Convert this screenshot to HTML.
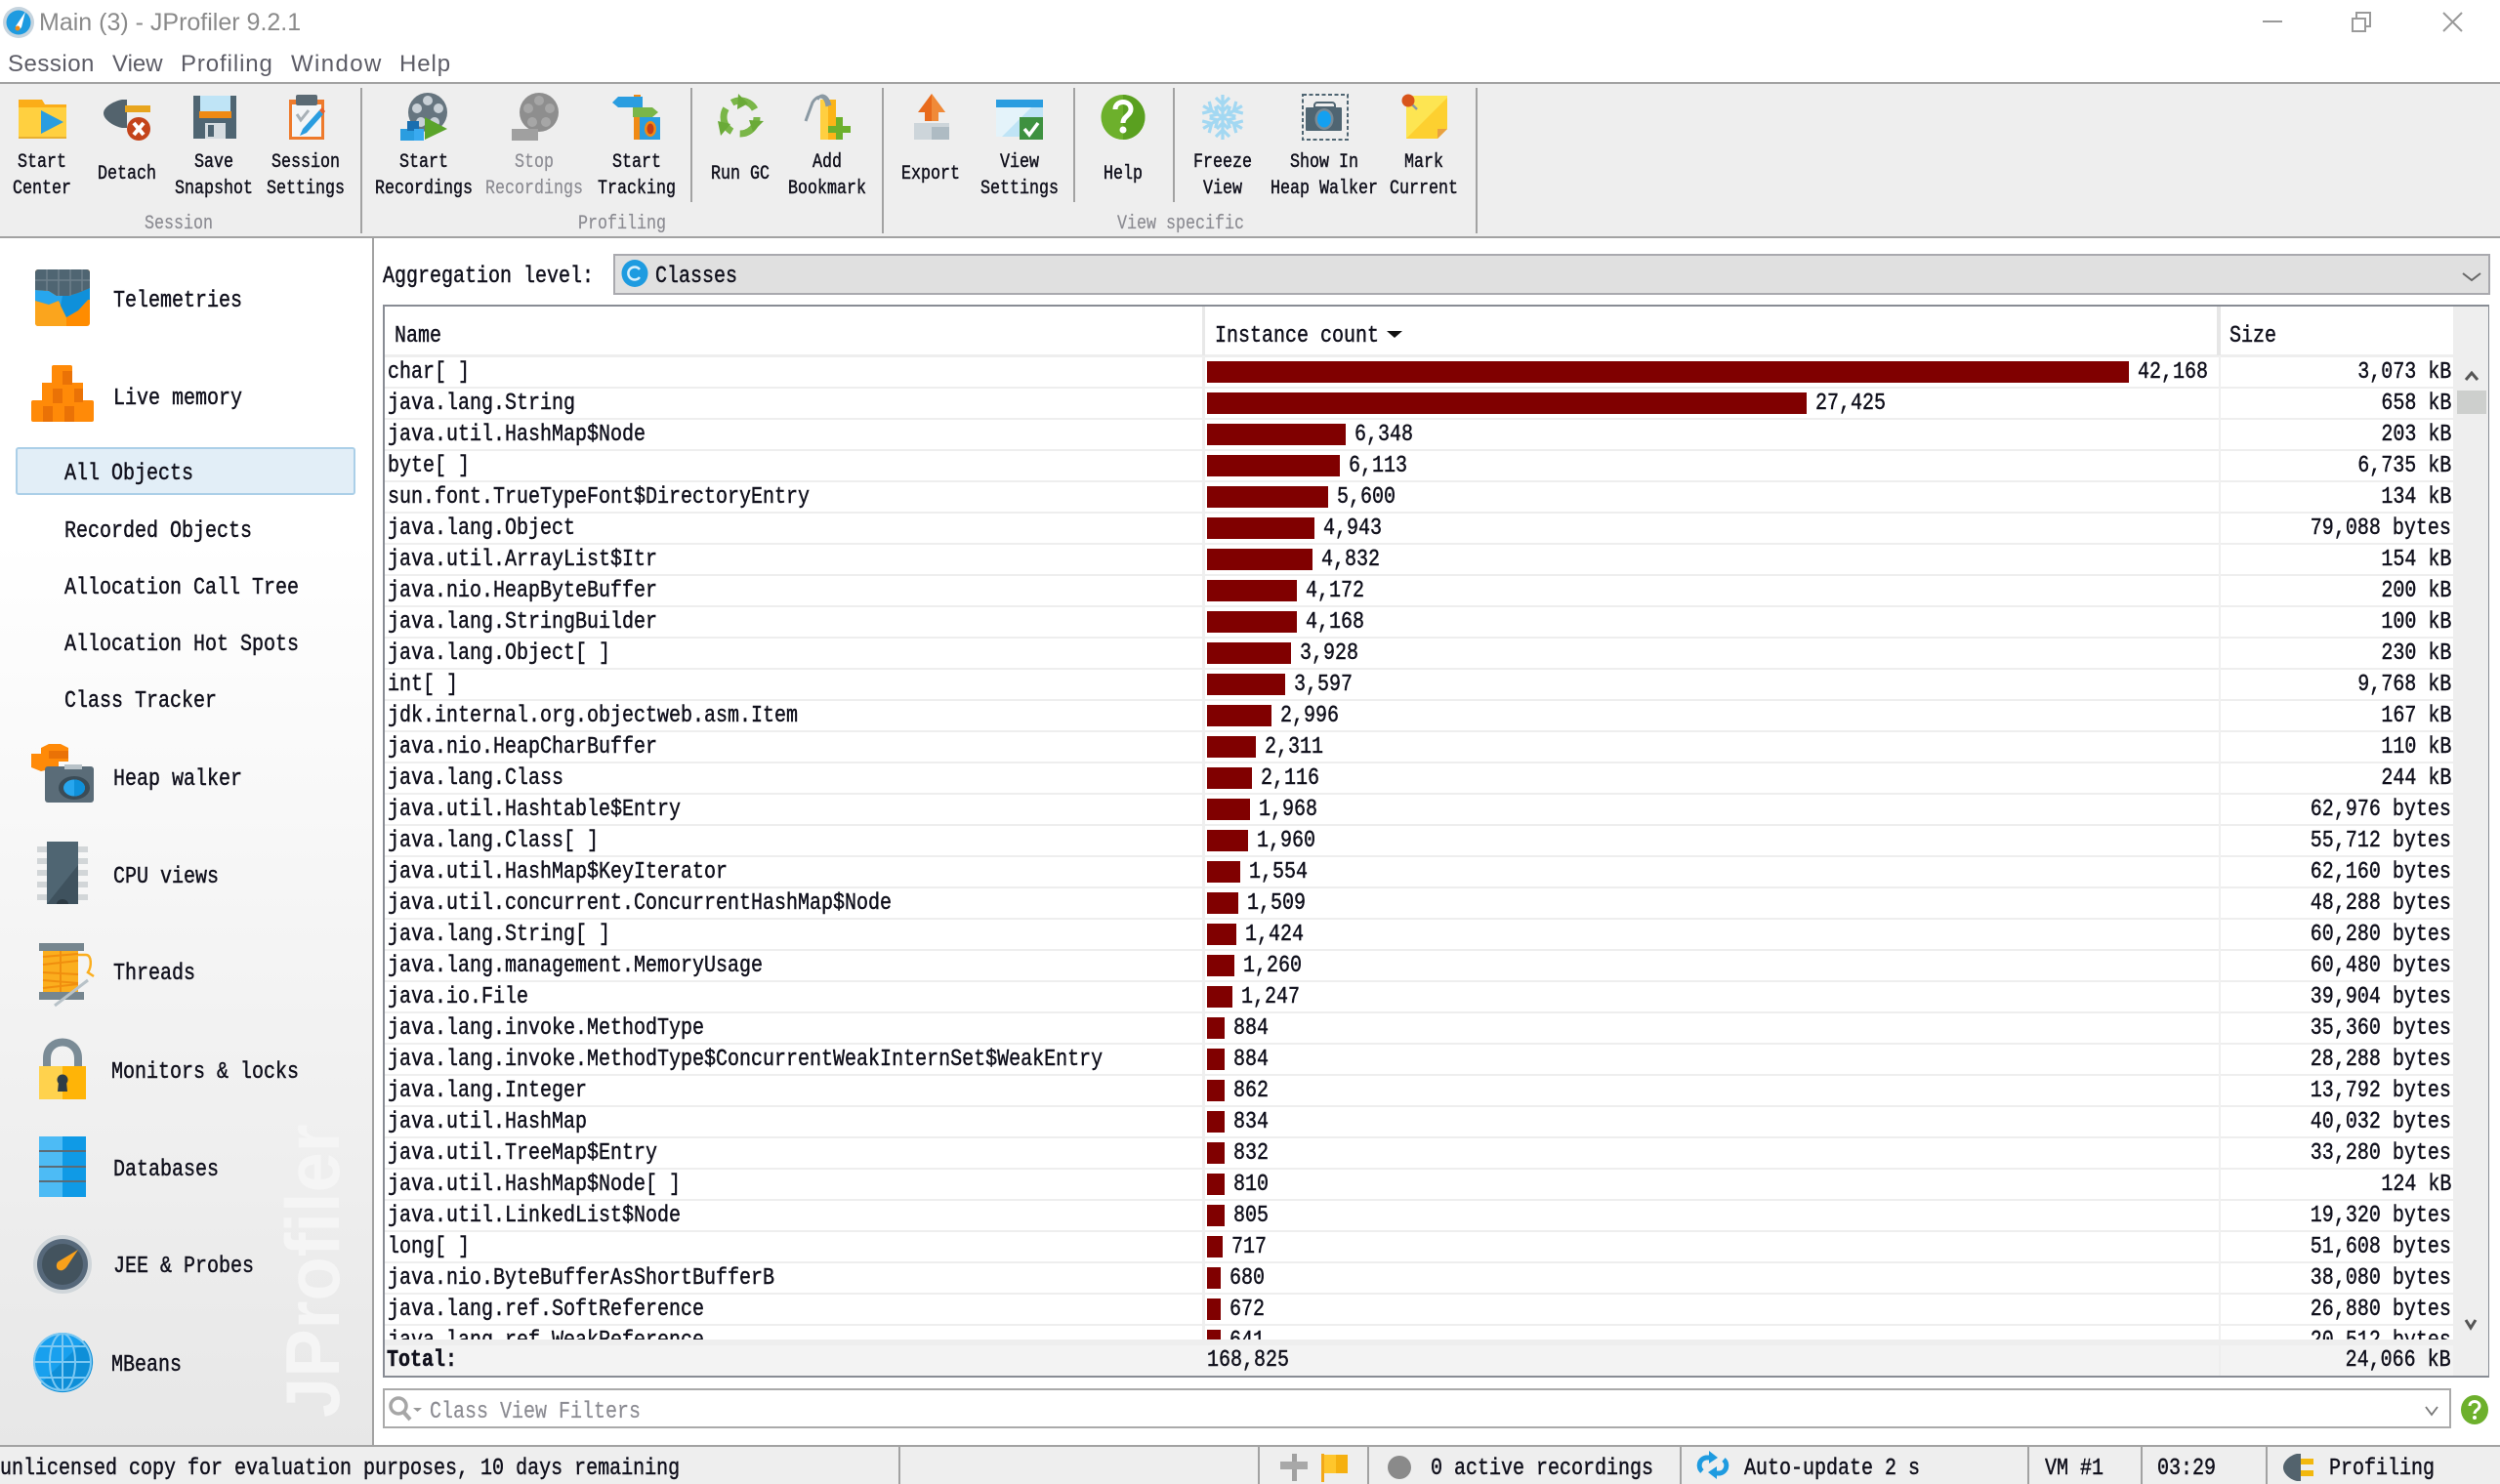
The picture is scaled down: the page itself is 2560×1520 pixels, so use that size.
<!DOCTYPE html>
<html><head><meta charset="utf-8"><title>Main (3) - JProfiler 9.2.1</title>
<style>
html,body{margin:0;padding:0;width:2560px;height:1520px;overflow:hidden;background:#fff}
div,span,i,b{position:absolute;display:block}
.t,.n,.v,.s,.m,.h{font-style:normal;font-weight:normal;font-family:"Liberation Mono",monospace;font-size:24px;line-height:28px;white-space:pre;color:#10101c;-webkit-text-stroke:.45px #10101c;transform:scaleX(.8333);transform-origin:0 50%;margin-top:2px}
.m{font-size:20px;line-height:24px;transform:scaleX(.8333) translateX(-50%);transform-origin:0 50%;width:auto}
.g{color:#8b8b92;-webkit-text-stroke:.2px #8b8b92}
.u{font-family:"Liberation Sans",sans-serif;white-space:pre}
.r{left:394px;width:2119px;height:30px;border-bottom:2px solid #eee}
.r b{left:842px;top:4px;height:22px;background:#800000}
.n{left:3px;top:0}
.v{top:0}
.s{right:3px;top:0;transform-origin:100% 50%}
.l{background:#eee}
.a{background:#a2a2a2}
</style></head><body>

<!-- title + menu -->
<span class="u" style="left:40px;top:8px;font-size:25px;line-height:30px;color:#8a8a8a">Main (3) - JProfiler 9.2.1</span>
<span class="u" style="left:8px;top:51px;font-size:24px;line-height:30px;color:#5c5c66;letter-spacing:.5px">Session</span>
<span class="u" style="left:115px;top:51px;font-size:24px;line-height:30px;color:#5c5c66">View</span>
<span class="u" style="left:185px;top:51px;font-size:24px;line-height:30px;color:#5c5c66;letter-spacing:.9px">Profiling</span>
<span class="u" style="left:298px;top:51px;font-size:24px;line-height:30px;color:#5c5c66;letter-spacing:1.4px">Window</span>
<span class="u" style="left:409px;top:51px;font-size:24px;line-height:30px;color:#5c5c66;letter-spacing:.9px">Help</span>

<!-- toolbar -->
<div class="a" style="left:0;top:84px;width:2560px;height:2px"></div>
<div class="l" style="left:0;top:86px;width:2560px;height:156px"></div>
<div class="a" style="left:0;top:242px;width:2560px;height:2px"></div>
<div class="a" style="left:369px;top:90px;width:2px;height:149px"></div>
<div class="a" style="left:707px;top:90px;width:2px;height:117px"></div>
<div class="a" style="left:903px;top:90px;width:2px;height:149px"></div>
<div class="a" style="left:1099px;top:90px;width:2px;height:117px"></div>
<div class="a" style="left:1201px;top:90px;width:2px;height:117px"></div>
<div class="a" style="left:1511px;top:90px;width:2px;height:149px"></div>

<span class="m" style="left:43px;top:153px">Start</span><span class="m" style="left:43px;top:180px">Center</span>
<span class="m" style="left:130px;top:165px">Detach</span>
<span class="m" style="left:219px;top:153px">Save</span><span class="m" style="left:219px;top:180px">Snapshot</span>
<span class="m" style="left:313px;top:153px">Session</span><span class="m" style="left:313px;top:180px">Settings</span>
<span class="m" style="left:434px;top:153px">Start</span><span class="m" style="left:434px;top:180px">Recordings</span>
<span class="m g" style="left:547px;top:153px">Stop</span><span class="m g" style="left:547px;top:180px">Recordings</span>
<span class="m" style="left:652px;top:153px">Start</span><span class="m" style="left:652px;top:180px">Tracking</span>
<span class="m" style="left:758px;top:165px">Run GC</span>
<span class="m" style="left:847px;top:153px">Add</span><span class="m" style="left:847px;top:180px">Bookmark</span>
<span class="m" style="left:953px;top:165px">Export</span>
<span class="m" style="left:1044px;top:153px">View</span><span class="m" style="left:1044px;top:180px">Settings</span>
<span class="m" style="left:1150px;top:165px">Help</span>
<span class="m" style="left:1252px;top:153px">Freeze</span><span class="m" style="left:1252px;top:180px">View</span>
<span class="m" style="left:1356px;top:153px">Show In</span><span class="m" style="left:1356px;top:180px">Heap Walker</span>
<span class="m" style="left:1458px;top:153px">Mark</span><span class="m" style="left:1458px;top:180px">Current</span>
<span class="m g" style="left:183px;top:216px">Session</span>
<span class="m g" style="left:637px;top:216px">Profiling</span>
<span class="m g" style="left:1209px;top:216px">View specific</span>

<!-- sidebar -->
<div style="left:0;top:244px;width:381px;height:1236px;background:linear-gradient(#fff 25%,#e7e7e7 100%)"></div>
<div class="a" style="left:381px;top:244px;width:2px;height:1236px"></div>
<span style="left:281px;top:1452px;font:bold 78px/78px 'Liberation Sans',sans-serif;color:#f5f5f5;white-space:pre;transform:rotate(-90deg) scaleX(.95);transform-origin:0 0">JProfiler</span>
<div style="left:16px;top:458px;width:344px;height:45px;background:#e2eef7;border:2px solid #abcfe8;border-radius:3px"></div>
<span class="t" style="left:116px;top:293px">Telemetries</span>
<span class="t" style="left:116px;top:393px">Live memory</span>
<span class="t" style="left:66px;top:470px">All Objects</span>
<span class="t" style="left:66px;top:529px">Recorded Objects</span>
<span class="t" style="left:66px;top:587px">Allocation Call Tree</span>
<span class="t" style="left:66px;top:645px">Allocation Hot Spots</span>
<span class="t" style="left:66px;top:703px">Class Tracker</span>
<span class="t" style="left:116px;top:783px">Heap walker</span>
<span class="t" style="left:116px;top:883px">CPU views</span>
<span class="t" style="left:116px;top:982px">Threads</span>
<span class="t" style="left:114px;top:1083px">Monitors &amp; locks</span>
<span class="t" style="left:116px;top:1183px">Databases</span>
<span class="t" style="left:116px;top:1282px">JEE &amp; Probes</span>
<span class="t" style="left:114px;top:1383px">MBeans</span>

<!-- aggregation -->
<span class="t" style="left:392px;top:268px">Aggregation level:</span>
<div style="left:628px;top:260px;width:1918px;height:38px;background:#e0e0e0;border:2px solid #a9a9ae"></div>
<span class="t" style="left:671px;top:268px">Classes</span>

<!-- table -->
<div style="left:392px;top:312px;width:2153px;height:1095px;border:2px solid #888c94;background:#fff"></div>
<div class="l" style="left:2512px;top:314px;width:36px;height:1095px"></div>
<div style="left:394px;top:363px;width:2118px;height:3px;background:#eee"></div>
<span class="h" style="left:404px;top:329px">Name</span>
<span class="h" style="left:1244px;top:329px">Instance count</span>
<span class="h" style="left:2283px;top:329px">Size</span>
<div style="left:1231px;top:314px;width:3px;height:50px;background:#e8e8e8"></div>
<div style="left:2270px;top:314px;width:4px;height:50px;background:#e6e6e6"></div>

<div style="left:0;top:0;width:2513px;height:1372px;overflow:hidden">
<div class="r" style="top:366px"><i class="n">char[ ]</i><b style="width:944px"></b><i class="v" style="left:1795px">42,168</i><i class="s">3,073 kB</i></div>
<div class="r" style="top:398px"><i class="n">java.lang.String</i><b style="width:614px"></b><i class="v" style="left:1465px">27,425</i><i class="s">658 kB</i></div>
<div class="r" style="top:430px"><i class="n">java.util.HashMap$Node</i><b style="width:142px"></b><i class="v" style="left:993px">6,348</i><i class="s">203 kB</i></div>
<div class="r" style="top:462px"><i class="n">byte[ ]</i><b style="width:136px"></b><i class="v" style="left:987px">6,113</i><i class="s">6,735 kB</i></div>
<div class="r" style="top:494px"><i class="n">sun.font.TrueTypeFont$DirectoryEntry</i><b style="width:124px"></b><i class="v" style="left:975px">5,600</i><i class="s">134 kB</i></div>
<div class="r" style="top:526px"><i class="n">java.lang.Object</i><b style="width:110px"></b><i class="v" style="left:961px">4,943</i><i class="s">79,088 bytes</i></div>
<div class="r" style="top:558px"><i class="n">java.util.ArrayList$Itr</i><b style="width:108px"></b><i class="v" style="left:959px">4,832</i><i class="s">154 kB</i></div>
<div class="r" style="top:590px"><i class="n">java.nio.HeapByteBuffer</i><b style="width:92px"></b><i class="v" style="left:943px">4,172</i><i class="s">200 kB</i></div>
<div class="r" style="top:622px"><i class="n">java.lang.StringBuilder</i><b style="width:92px"></b><i class="v" style="left:943px">4,168</i><i class="s">100 kB</i></div>
<div class="r" style="top:654px"><i class="n">java.lang.Object[ ]</i><b style="width:86px"></b><i class="v" style="left:937px">3,928</i><i class="s">230 kB</i></div>
<div class="r" style="top:686px"><i class="n">int[ ]</i><b style="width:80px"></b><i class="v" style="left:931px">3,597</i><i class="s">9,768 kB</i></div>
<div class="r" style="top:718px"><i class="n">jdk.internal.org.objectweb.asm.Item</i><b style="width:66px"></b><i class="v" style="left:917px">2,996</i><i class="s">167 kB</i></div>
<div class="r" style="top:750px"><i class="n">java.nio.HeapCharBuffer</i><b style="width:50px"></b><i class="v" style="left:901px">2,311</i><i class="s">110 kB</i></div>
<div class="r" style="top:782px"><i class="n">java.lang.Class</i><b style="width:46px"></b><i class="v" style="left:897px">2,116</i><i class="s">244 kB</i></div>
<div class="r" style="top:814px"><i class="n">java.util.Hashtable$Entry</i><b style="width:44px"></b><i class="v" style="left:895px">1,968</i><i class="s">62,976 bytes</i></div>
<div class="r" style="top:846px"><i class="n">java.lang.Class[ ]</i><b style="width:42px"></b><i class="v" style="left:893px">1,960</i><i class="s">55,712 bytes</i></div>
<div class="r" style="top:878px"><i class="n">java.util.HashMap$KeyIterator</i><b style="width:34px"></b><i class="v" style="left:885px">1,554</i><i class="s">62,160 bytes</i></div>
<div class="r" style="top:910px"><i class="n">java.util.concurrent.ConcurrentHashMap$Node</i><b style="width:32px"></b><i class="v" style="left:883px">1,509</i><i class="s">48,288 bytes</i></div>
<div class="r" style="top:942px"><i class="n">java.lang.String[ ]</i><b style="width:30px"></b><i class="v" style="left:881px">1,424</i><i class="s">60,280 bytes</i></div>
<div class="r" style="top:974px"><i class="n">java.lang.management.MemoryUsage</i><b style="width:28px"></b><i class="v" style="left:879px">1,260</i><i class="s">60,480 bytes</i></div>
<div class="r" style="top:1006px"><i class="n">java.io.File</i><b style="width:26px"></b><i class="v" style="left:877px">1,247</i><i class="s">39,904 bytes</i></div>
<div class="r" style="top:1038px"><i class="n">java.lang.invoke.MethodType</i><b style="width:18px"></b><i class="v" style="left:869px">884</i><i class="s">35,360 bytes</i></div>
<div class="r" style="top:1070px"><i class="n">java.lang.invoke.MethodType$ConcurrentWeakInternSet$WeakEntry</i><b style="width:18px"></b><i class="v" style="left:869px">884</i><i class="s">28,288 bytes</i></div>
<div class="r" style="top:1102px"><i class="n">java.lang.Integer</i><b style="width:18px"></b><i class="v" style="left:869px">862</i><i class="s">13,792 bytes</i></div>
<div class="r" style="top:1134px"><i class="n">java.util.HashMap</i><b style="width:18px"></b><i class="v" style="left:869px">834</i><i class="s">40,032 bytes</i></div>
<div class="r" style="top:1166px"><i class="n">java.util.TreeMap$Entry</i><b style="width:18px"></b><i class="v" style="left:869px">832</i><i class="s">33,280 bytes</i></div>
<div class="r" style="top:1198px"><i class="n">java.util.HashMap$Node[ ]</i><b style="width:18px"></b><i class="v" style="left:869px">810</i><i class="s">124 kB</i></div>
<div class="r" style="top:1230px"><i class="n">java.util.LinkedList$Node</i><b style="width:18px"></b><i class="v" style="left:869px">805</i><i class="s">19,320 bytes</i></div>
<div class="r" style="top:1262px"><i class="n">long[ ]</i><b style="width:16px"></b><i class="v" style="left:867px">717</i><i class="s">51,608 bytes</i></div>
<div class="r" style="top:1294px"><i class="n">java.nio.ByteBufferAsShortBufferB</i><b style="width:14px"></b><i class="v" style="left:865px">680</i><i class="s">38,080 bytes</i></div>
<div class="r" style="top:1326px"><i class="n">java.lang.ref.SoftReference</i><b style="width:14px"></b><i class="v" style="left:865px">672</i><i class="s">26,880 bytes</i></div>
<div class="r" style="top:1358px"><i class="n">java.lang.ref.WeakReference</i><b style="width:14px"></b><i class="v" style="left:865px">641</i><i class="s">20,512 bytes</i></div>
<div style="left:1231px;top:364px;width:3px;height:1010px;background:#efefef"></div>
<div style="left:2272px;top:364px;width:2px;height:1010px;background:#f0f0f0"></div>
</div>
<div class="l" style="left:394px;top:1372px;width:2120px;height:6px"></div>
<div style="left:394px;top:1378px;width:2118px;height:31px;background:#f3f3f3"></div>
<div style="left:2272px;top:1378px;width:2px;height:31px;background:#eee"></div>
<span class="t" style="left:396px;top:1378px;font-weight:bold;-webkit-text-stroke:.5px #10101c">Total:</span>
<span class="t" style="left:1236px;top:1378px">168,825</span>
<span class="t" style="right:50px;top:1378px;transform-origin:100% 50%">24,066 kB</span>
<div style="left:2516px;top:400px;width:30px;height:24px;background:#cdcfcd"></div>

<!-- filter -->
<div style="left:392px;top:1422px;width:2114px;height:37px;background:#fff;border:2px solid #aaa"></div>
<span class="t g" style="left:440px;top:1431px">Class View Filters</span>

<!-- status bar -->
<div class="l" style="left:0;top:1482px;width:2560px;height:38px"></div>
<div class="a" style="left:0;top:1480px;width:2560px;height:2px"></div>
<div class="a" style="left:920px;top:1482px;width:2px;height:38px"></div>
<div class="a" style="left:1288px;top:1482px;width:2px;height:38px"></div>
<div class="a" style="left:1400px;top:1482px;width:2px;height:38px"></div>
<div class="a" style="left:1720px;top:1482px;width:2px;height:38px"></div>
<div class="a" style="left:2076px;top:1482px;width:2px;height:38px"></div>
<div class="a" style="left:2192px;top:1482px;width:2px;height:38px"></div>
<div class="a" style="left:2320px;top:1482px;width:2px;height:38px"></div>
<span class="t" style="left:0;top:1489px">unlicensed copy for evaluation purposes, 10 days remaining</span>
<span class="t" style="left:1465px;top:1489px">0 active recordings</span>
<span class="t" style="left:1786px;top:1489px">Auto-update 2 s</span>
<span class="t" style="left:2094px;top:1489px">VM #1</span>
<span class="t" style="left:2209px;top:1489px">03:29</span>
<span class="t" style="left:2385px;top:1489px">Profiling</span>

<!-- all icons, page coordinates -->
<svg width="2560" height="1520" viewBox="0 0 2560 1520" style="position:absolute;left:0;top:0">
<!-- app icon -->
<circle cx="19" cy="23" r="16" fill="#c6d4de"/><circle cx="19" cy="23" r="12.5" fill="#1e9be0"/><path d="M26 12L16 27l3 4 3-3z" fill="#fff"/><circle cx="18" cy="29" r="2.5" fill="#f08a14"/>
<!-- window controls -->
<path d="M2317 22h20" stroke="#9a9a9a" stroke-width="2"/>
<path d="M2409 19h13v13h-13zM2413 18v-5h14v14h-4" fill="none" stroke="#9a9a9a" stroke-width="2"/>
<path d="M2502 13l19 19M2521 13l-19 19" stroke="#9a9a9a" stroke-width="2"/>

<!-- Start Center -->
<path d="M19 102h24l3 5h22v8H19z" fill="#fbad18"/><rect x="19" y="110" width="49" height="32" fill="#ffd040"/><rect x="19" y="140" width="49" height="2" fill="#e8b030"/><path d="M42 113l23 12-23 12z" fill="#2a9de0"/>
<!-- Detach -->
<path d="M130 102h-5c-10 2-19 8-19 14s9 13 19 15h5z" fill="#53636d"/><rect x="128" y="108" width="26" height="7" fill="#e8a51e"/><circle cx="142" cy="132" r="12" fill="#c4441b"/><path d="M137 126l10 12M147 126l-10 12" stroke="#fff" stroke-width="4"/>
<!-- Save -->
<rect x="198" y="98" width="44" height="44" fill="#4f6572"/><rect x="205" y="98" width="31" height="18" fill="#bfe4f6"/><rect x="204" y="114" width="33" height="7" fill="#f08a14"/><rect x="210" y="126" width="21" height="16" fill="#d6dce0"/><rect x="213" y="128" width="6" height="12" fill="#4f6572"/>
<!-- Session settings -->
<rect x="296" y="102" width="36" height="41" fill="#ee7a2c"/><rect x="299" y="107" width="30" height="33" fill="#f3f5f7"/><rect x="303" y="97" width="22" height="11" rx="2" fill="#5b6a74"/><path d="M304 117l4 6 8-10" fill="none" stroke="#a8b0b6" stroke-width="3"/><path d="M310 132l-3 7 7-3 17-19-4-4z" fill="#2a9de0"/><path d="M327 113l4 4 2-3-3-4z" fill="#e8602a"/>
<!-- Start Recordings -->
<circle cx="438" cy="115" r="20" fill="#66757f"/><g fill="#c8d0d6"><circle cx="438" cy="103" r="5"/><circle cx="449" cy="111" r="5"/><circle cx="445" cy="125" r="5"/><circle cx="431" cy="125" r="5"/><circle cx="427" cy="111" r="5"/></g>
<rect x="410" y="132" width="14" height="12" fill="#2a9de0"/><rect x="417" y="124" width="12" height="10" fill="#1a6fb0"/><rect x="424" y="132" width="10" height="12" fill="#39aaf0"/><path d="M435 120l23 12-23 11z" fill="#5aa42a"/>
<!-- Stop Recordings -->
<circle cx="552" cy="115" r="20" fill="#8e8e8e"/><g fill="#a6a6a6"><circle cx="552" cy="103" r="5"/><circle cx="563" cy="111" r="5"/><circle cx="559" cy="125" r="5"/><circle cx="545" cy="125" r="5"/><circle cx="541" cy="111" r="5"/></g><rect x="524" y="132" width="27" height="12" fill="#a0a0a0"/>
<!-- Start Tracking -->
<rect x="649" y="97" width="7" height="46" fill="#f08a14"/><path d="M627 105l6-6h25v11h-25z" fill="#2a9de0"/><path d="M648 110h20l6 5-6 5h-20z" fill="#7ab648"/><rect x="655" y="120" width="21" height="23" fill="#2a9de0"/><ellipse cx="666" cy="132" rx="6" ry="8" fill="#f08a14"/><ellipse cx="666" cy="132" rx="3.5" ry="5.5" fill="#c43e18"/>
<!-- Run GC -->
<circle cx="758" cy="120" r="17" fill="none" stroke="#7ab648" stroke-width="7" stroke-dasharray="27 8.6"/><path d="M756 96l10 10-11 6zM782 124l-11 11-4-12zM738 139l-3-15 13 3z" fill="#6aaa38"/>
<!-- Add Bookmark -->
<rect x="840" y="102" width="16" height="41" fill="#fbb418"/><rect x="840" y="102" width="8" height="41" fill="#ffcf40"/><path d="M847 109c-2-14-11-11-15-4l-7 19M850 108c-3-12-10-12-13-6" fill="none" stroke="#8a99a3" stroke-width="3"/><path d="M856 120h7v9h8v7h-8v7h-7v-7h-8v-7h8z" fill="#6db02c"/>
<!-- Export -->
<path d="M954 96l14 19h-7v9h-14v-9h-7z" fill="#e86a1c"/><path d="M954 96l14 19h-7v9h-7z" fill="#f08a38"/><rect x="936" y="126" width="36" height="17" fill="#cdd5da"/><rect x="954" y="130" width="18" height="13" fill="#aebbc3"/>
<!-- View Settings -->
<rect x="1020" y="102" width="48" height="38" fill="#bfe4f6"/><path d="M1020 110h36l-30 30h-6z" fill="#e4f3fa"/><rect x="1020" y="102" width="48" height="8" fill="#2a9de0"/><rect x="1044" y="120" width="24" height="23" fill="#3e9140"/><path d="M1049 132l5 6 9-12" fill="none" stroke="#fff" stroke-width="3.5"/>
<!-- Help -->
<ellipse cx="1150" cy="120" rx="22.5" ry="23" fill="#6db02c"/><path d="M1150 97a22.5 23 0 0 1 0 46z" fill="#5aa020"/><path d="M1142 112c0-10 16-10 16 0 0 6-8 7-8 14" fill="none" stroke="#fff" stroke-width="5"/><circle cx="1150" cy="133" r="3.5" fill="#fff"/>
<!-- Freeze -->
<g fill="none" stroke="#a3d8f2" stroke-width="3.2">
<g><path d="M1252 120v-23M1245 100l7 7 7-7M1246 108l6 6 6-6"/></g>
<g transform="rotate(60 1252 120)"><path d="M1252 120v-23M1245 100l7 7 7-7M1246 108l6 6 6-6"/></g>
<g transform="rotate(120 1252 120)"><path d="M1252 120v-23M1245 100l7 7 7-7M1246 108l6 6 6-6"/></g>
<g transform="rotate(180 1252 120)"><path d="M1252 120v-23M1245 100l7 7 7-7M1246 108l6 6 6-6"/></g>
<g transform="rotate(240 1252 120)"><path d="M1252 120v-23M1245 100l7 7 7-7M1246 108l6 6 6-6"/></g>
<g transform="rotate(300 1252 120)"><path d="M1252 120v-23M1245 100l7 7 7-7M1246 108l6 6 6-6"/></g>
</g>
<!-- Show in Heap Walker -->
<rect x="1334" y="97" width="46" height="46" fill="none" stroke="#4f6572" stroke-width="2" stroke-dasharray="4 2.5"/><path d="M1346 110v-2a3 3 0 0 1 3-3h15a3 3 0 0 1 3 3v2z" fill="none" stroke="#4f6572" stroke-width="2"/><rect x="1337" y="110" width="37" height="24" rx="1" fill="#4f6572"/><ellipse cx="1356" cy="122" rx="9.5" ry="11" fill="#7a8b96"/><ellipse cx="1356" cy="122" rx="7" ry="8.5" fill="#14a0f0"/>
<!-- Mark Current -->
<path d="M1440 98h42v34l-10 10h-32z" fill="#fde552"/><path d="M1482 100v32l-10 10h-32z" fill="#fdd030"/><path d="M1482 132h-10v10z" fill="#e8a040"/><path d="M1444 105l7 7" stroke="#8a99a3" stroke-width="2.5"/><circle cx="1442" cy="103" r="6.5" fill="#d8541a"/>

<!-- C icon and chevrons -->
<ellipse cx="650" cy="280" rx="13.5" ry="14" fill="#1e9be0"/><path d="M655 276a6.5 6.5 0 1 0 0 8" fill="none" stroke="#d8effc" stroke-width="2.5"/>
<path d="M2522 280l9 7 9-7" fill="none" stroke="#666" stroke-width="2"/>
<path d="M2525 389l6-7 6 7" fill="none" stroke="#555" stroke-width="3"/>
<path d="M2525 1352l5 8 5-8" fill="none" stroke="#555" stroke-width="3"/>
<path d="M1420 339h16l-8 7z" fill="#111"/>

<!-- filter icons -->
<circle cx="408" cy="1440" r="8" fill="none" stroke="#a6a6a6" stroke-width="3.5"/><path d="M413 1446l7 8" stroke="#a6a6a6" stroke-width="4"/><path d="M423 1442h9l-4.500 4z" fill="#999"/>
<path d="M2484 1441l6 8 6-8" fill="none" stroke="#777" stroke-width="1.800"/>
<ellipse cx="2534" cy="1444" rx="14" ry="15" fill="#6db02c"/><path d="M2529 1440c0-6 10-6 10 0 0 4-5 4-5 8" fill="none" stroke="#fff" stroke-width="3"/><circle cx="2534" cy="1452" r="2" fill="#fff"/>

<!-- status icons -->
<path d="M1323 1489h5v28h-5z" fill="#a0a0a0"/><path d="M1311 1497h28v8h-28z" fill="#a8a8a8"/><rect x="1353" y="1489" width="3" height="29" fill="#f2a818"/><path d="M1356 1490h24v19h-24z" fill="#ffc62c"/><path d="M1368 1490h12v19h-12z" fill="#f5b010"/>
<ellipse cx="1433" cy="1503" rx="12" ry="12" fill="#8a8a8a"/>
<g fill="none" stroke="#1e9be0" stroke-width="5"><path d="M1754 1493h-7a8 8 0 0 0-4 14"/><path d="M1754 1509h7a8 8 0 0 0 4-14"/></g><path d="M1750 1486l9 7-9 6zM1758 1515l-9-7 9-6z" fill="#1e9be0"/>
<path d="M2356 1489v28h-4c-8-2-14-8-14-14s6-12 14-14z" fill="#53636d"/><rect x="2356" y="1494" width="13" height="6" fill="#f2b80e"/><rect x="2356" y="1506" width="13" height="6" fill="#f2b80e"/>

<!-- Telemetries -->
<rect x="36" y="276" width="56" height="58" rx="3" fill="#ff8c00"/><path d="M36 331V308l14 4 10-4 8 17v9H39a3 3 0 0 1-3-3z" fill="#fba51d"/>
<path d="M36 297l14 1 8 5h12l10-3 12-5v12h-2l-10 11-12 7-8-17-10 4-14-4z" fill="#27a6ee"/><path d="M64 303h6l10-3 12-5v12h-2l-10 11-12 7-6-12z" fill="#0f90da"/>
<path d="M39 276h50a3 3 0 0 1 3 3v16l-12 5-10 3H58l-8-5-14-1V279a3 3 0 0 1 3-3z" fill="#4f6572"/>
<path d="M48 276v22M60 276v27M72 276v27M84 276v22M36 287h56" stroke="#6e808b" stroke-width="1.500" fill="none"/>
<!-- Live memory -->
<g fill="#ff8a08"><rect x="32" y="410" width="64" height="22" rx="2"/><rect x="43" y="392" width="42" height="20"/><rect x="53" y="374" width="21" height="20" rx="2"/></g>
<g fill="#ea7206"><rect x="64" y="380" width="10" height="14"/><rect x="54" y="398" width="10" height="15"/><rect x="76" y="398" width="9" height="14"/><rect x="44" y="416" width="10" height="16"/><rect x="66" y="416" width="10" height="16"/></g>
<!-- Heap walker -->
<path d="M32 772h10v-6l8-4h12l8 4v14h-10v6l-18 4-10-4z" fill="#ff8a08"/><rect x="50" y="769" width="20" height="8" fill="#ea7206"/>
<rect x="46" y="785" width="50" height="37" rx="3" fill="#5a6c78"/><rect x="66" y="783" width="18" height="5" fill="#b8c2c8"/><ellipse cx="76" cy="807" rx="16" ry="12" fill="#3b4c57"/><ellipse cx="76" cy="807" rx="11" ry="8.500" fill="#27a6ee"/><path d="M76 798.500a11 8.500 0 0 1 0 17z" fill="#0f90da"/>
<!-- CPU -->
<g fill="#d2d6d8"><rect x="38" y="867" width="52" height="6"/><rect x="38" y="879" width="52" height="6"/><rect x="38" y="891" width="52" height="6"/><rect x="38" y="903" width="52" height="6"/><rect x="38" y="916" width="52" height="6"/></g>
<rect x="48" y="862" width="32" height="64" fill="#4f6572"/><path d="M48 926l32-40v40z" fill="#3f525e"/><path d="M58 926a6 5 0 0 1 12 0z" fill="#2c3a43"/>
<!-- Threads -->
<rect x="44" y="972" width="36" height="46" fill="#fbae1e"/><path d="M44 980l36-3M44 988l36-4M44 996l36 2M44 1004l36 3M44 1012l36-4M62 972v46" stroke="#f08e0e" stroke-width="2"/>
<rect x="40" y="966" width="46" height="8" fill="#76868f"/><rect x="40" y="1016" width="46" height="8" fill="#76868f"/>
<path d="M80 978h8c6 0 6 12 2 18l6 4" fill="none" stroke="#fbae1e" stroke-width="2.500"/><path d="M56 1030l34-26" stroke="#b8c2c8" stroke-width="3"/>
<!-- Monitors -->
<path d="M48 1096v-12c0-22 32-22 32 0v12" fill="none" stroke="#7a8b96" stroke-width="8"/><rect x="40" y="1092" width="24" height="34" fill="#ffd24d"/><rect x="64" y="1092" width="24" height="34" fill="#ffb407"/><circle cx="64" cy="1106" r="5.500" fill="#2f3d46"/><path d="M60 1108h8l1 10H59z" fill="#2f3d46"/>
<!-- Databases -->
<g fill="#4dbbf5"><rect x="40" y="1164" width="24" height="14"/><rect x="40" y="1180" width="24" height="14"/><rect x="40" y="1196" width="24" height="13"/><rect x="40" y="1211" width="24" height="15"/></g>
<g fill="#0f9ae6"><rect x="64" y="1164" width="24" height="14"/><rect x="64" y="1180" width="24" height="14"/><rect x="64" y="1196" width="24" height="13"/><rect x="64" y="1211" width="24" height="15"/></g>
<g fill="#5a6c78"><rect x="40" y="1178" width="48" height="2"/><rect x="40" y="1194" width="48" height="2"/><rect x="40" y="1209" width="48" height="2"/></g>
<!-- JEE -->
<circle cx="64" cy="1295" r="30" fill="#d0d6da"/><circle cx="64" cy="1295" r="26" fill="#56687a"/><circle cx="64" cy="1295" r="21" fill="#43535e"/><path d="M80 1280l-20 12c-3 2-3 8 1 9 3 1 5-1 7-3z" fill="#f9a11b"/>
<!-- MBeans -->
<circle cx="64" cy="1395" r="30" fill="#18a0ee"/><path d="M86 1373a30 30 0 0 1-44 44z" fill="#0e8fd8"/><g fill="none" stroke="#7cc8f2" stroke-width="2"><circle cx="64" cy="1395" r="29"/><ellipse cx="64" cy="1395" rx="13" ry="29"/><path d="M64 1366v58M35 1395h58M40 1379h48M40 1411h48"/></g>
</svg>
</body></html>
